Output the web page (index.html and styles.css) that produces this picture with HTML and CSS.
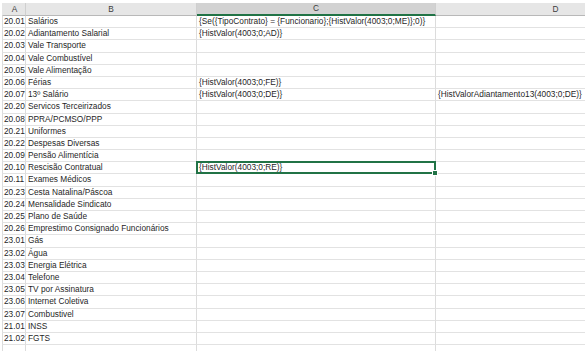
FILE: index.html
```html
<!DOCTYPE html>
<html lang="pt-BR">
<head>
<meta charset="utf-8">
<title>Planilha</title>
<link rel="stylesheet" href="styles.css">
</head>
<body>
<div class="sheet">
  <div class="row head">
    <div class="cell">A</div><div class="cell">B</div><div class="cell sel-col">C</div><div class="cell">D</div>
  </div>
  <div class="row"><div class="cell">20.01</div><div class="cell">Salários</div><div class="cell">{Se({TipoContrato} = {Funcionario};{HistValor(4003;0;ME)};0)}</div><div class="cell"></div></div>
  <div class="row"><div class="cell">20.02</div><div class="cell">Adiantamento Salarial</div><div class="cell">{HistValor(4003;0;AD)}</div><div class="cell"></div></div>
  <div class="row"><div class="cell">20.03</div><div class="cell">Vale Transporte</div><div class="cell"></div><div class="cell"></div></div>
  <div class="row"><div class="cell">20.04</div><div class="cell">Vale Combustível</div><div class="cell"></div><div class="cell"></div></div>
  <div class="row"><div class="cell">20.05</div><div class="cell">Vale Alimentação</div><div class="cell"></div><div class="cell"></div></div>
  <div class="row"><div class="cell">20.06</div><div class="cell">Férias</div><div class="cell">{HistValor(4003;0;FE)}</div><div class="cell"></div></div>
  <div class="row"><div class="cell">20.07</div><div class="cell">13º Salário</div><div class="cell">{HistValor(4003;0;DE)}</div><div class="cell">{HistValorAdiantamento13(4003;0;DE)}</div></div>
  <div class="row"><div class="cell">20.20</div><div class="cell">Servicos Terceirizados</div><div class="cell"></div><div class="cell"></div></div>
  <div class="row"><div class="cell">20.08</div><div class="cell">PPRA/PCMSO/PPP</div><div class="cell"></div><div class="cell"></div></div>
  <div class="row"><div class="cell">20.21</div><div class="cell">Uniformes</div><div class="cell"></div><div class="cell"></div></div>
  <div class="row"><div class="cell">20.22</div><div class="cell">Despesas Diversas</div><div class="cell"></div><div class="cell"></div></div>
  <div class="row"><div class="cell">20.09</div><div class="cell">Pensão Alimentícia</div><div class="cell"></div><div class="cell"></div></div>
  <div class="row"><div class="cell">20.10</div><div class="cell">Rescisão Contratual</div><div class="cell selected">{HistValor(4003;0;RE)}</div><div class="cell"></div></div>
  <div class="row"><div class="cell">20.11</div><div class="cell">Exames Médicos</div><div class="cell"></div><div class="cell"></div></div>
  <div class="row"><div class="cell">20.23</div><div class="cell">Cesta Natalina/Páscoa</div><div class="cell"></div><div class="cell"></div></div>
  <div class="row"><div class="cell">20.24</div><div class="cell">Mensalidade Sindicato</div><div class="cell"></div><div class="cell"></div></div>
  <div class="row"><div class="cell">20.25</div><div class="cell">Plano de Saúde</div><div class="cell"></div><div class="cell"></div></div>
  <div class="row"><div class="cell">20.26</div><div class="cell">Emprestimo Consignado Funcionários</div><div class="cell"></div><div class="cell"></div></div>
  <div class="row"><div class="cell">23.01</div><div class="cell">Gás</div><div class="cell"></div><div class="cell"></div></div>
  <div class="row"><div class="cell">23.02</div><div class="cell">Água</div><div class="cell"></div><div class="cell"></div></div>
  <div class="row"><div class="cell">23.03</div><div class="cell">Energia Elétrica</div><div class="cell"></div><div class="cell"></div></div>
  <div class="row"><div class="cell">23.04</div><div class="cell">Telefone</div><div class="cell"></div><div class="cell"></div></div>
  <div class="row"><div class="cell">23.05</div><div class="cell">TV por Assinatura</div><div class="cell"></div><div class="cell"></div></div>
  <div class="row"><div class="cell">23.06</div><div class="cell">Internet Coletiva</div><div class="cell"></div><div class="cell"></div></div>
  <div class="row"><div class="cell">23.07</div><div class="cell">Combustivel</div><div class="cell"></div><div class="cell"></div></div>
  <div class="row"><div class="cell">21.01</div><div class="cell">INSS</div><div class="cell"></div><div class="cell"></div></div>
  <div class="row"><div class="cell">21.02</div><div class="cell">FGTS</div><div class="cell"></div><div class="cell"></div></div>
  <div class="row"><div class="cell"></div><div class="cell"></div><div class="cell"></div><div class="cell"></div></div>
</div>
</body>
</html>
```

FILE: styles.css
```css
html, body {
  margin: 0;
  padding: 0;
  background: #ffffff;
  overflow: hidden;
}
body {
  width: 585px;
  height: 351px;
}
.sheet {
  box-sizing: border-box;
  width: 585px;
  height: 351px;
  overflow: hidden;
  padding: 3px 0 0 2px;
  display: flex;
  flex-direction: column;
  font-family: "Liberation Sans", Arial, sans-serif;
  font-size: 8.3px;
  color: #1f1f1f;
}
.row {
  display: grid;
  grid-template-columns: 24px 171px 239px 240px;
  height: 12.2px;
  flex: none;
}
.cell {
  box-sizing: border-box;
  border-right: 1px solid #dcdcdc;
  border-bottom: 1px solid #e2e2e2;
  padding-left: 2px;
  white-space: nowrap;
  line-height: 11px;
  position: relative;
}
.row .cell:first-child {
  border-left: 1px solid #dcdcdc;
  padding-left: 1px;
}
.row.head {
  height: 13px;
}
.head .cell {
  background: #e6e6e6;
  color: #3c3c3c;
  text-align: center;
  padding-left: 0;
  line-height: 12px;
  border-right: 1px solid #cfcfcf;
  border-bottom: 1px solid #b8b8b8;
}
.head .cell:first-child {
  border-left: 1px solid #e6e6e6;
}
.head .sel-col {
  background: #d2d2d2;
  border-bottom: 2px solid #217346;
  line-height: 11px;
}
.selected::after {
  content: "";
  position: absolute;
  left: -1px;
  top: -1px;
  right: -1px;
  bottom: -1px;
  border: 2px solid #217346;
}
.selected::before {
  content: "";
  position: absolute;
  right: -3px;
  bottom: -3px;
  width: 4px;
  height: 4px;
  background: #217346;
  border: 1px solid #ffffff;
  z-index: 2;
}
```
